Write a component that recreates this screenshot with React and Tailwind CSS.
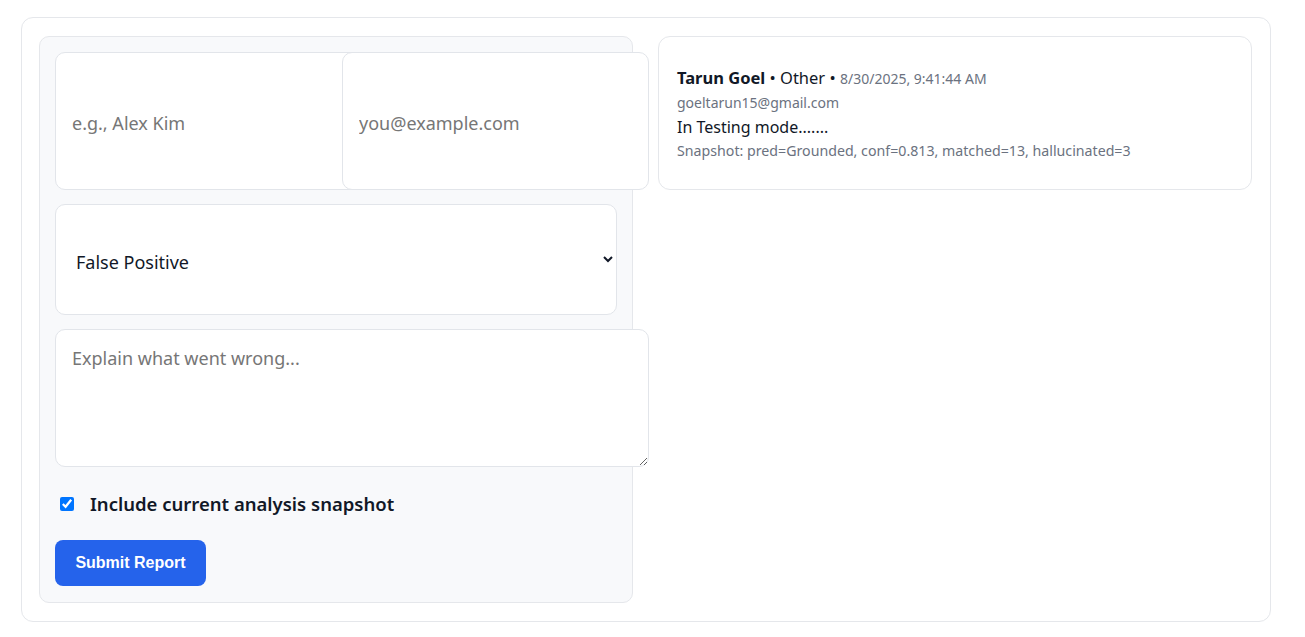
import { useState } from "react";

const fieldBase =
  "block rounded-[10px] border border-[#e2e5ea] bg-white text-lg text-[#111827] placeholder:text-[#767676] outline-none";

function ReportForm() {
  const [include, setInclude] = useState(true);

  return (
    <div className="flex flex-col rounded-[10px] border border-[#e5e7eb] bg-[#f8f9fb] px-[15px] pb-[16px] pt-[15px]">
      <div className="grid grid-cols-2 gap-3">
        <input
          className={`${fieldBase} h-[138px] w-[calc(100%+32px)] px-4 pt-1`}
          placeholder="e.g., Alex Kim"
        />
        <input
          className={`${fieldBase} h-[138px] w-[calc(100%+32px)] px-4 pt-1`}
          placeholder="you@example.com"
        />
      </div>

      <select
        className={`${fieldBase} mt-[14px] h-[111px] w-full px-4 pt-1`}
        defaultValue="fp"
      >
        <option value="fp">False Positive</option>
        <option value="fn">False Negative</option>
        <option value="other">Other</option>
      </select>

      <textarea
        className={`${fieldBase} mt-[14px] h-[138px] w-[calc(100%+32px)] px-4 py-4 leading-6`}
        placeholder="Explain what went wrong..."
      />

      <label className="mt-[23px] flex h-[28px] items-center gap-4 pl-[5px] text-[18.5px] font-semibold text-[#111827]">
        <input
          type="checkbox"
          className="h-[14px] w-[14px] accent-[#0075ff]"
          checked={include}
          onChange={(e) => setInclude(e.target.checked)}
        />
        Include current analysis snapshot
      </label>

      <button className="mt-[22px] h-[46px] w-[151px] rounded-lg bg-[#2563eb] font-['Liberation_Sans',Arial,sans-serif] text-base font-bold text-white">
        Submit Report
      </button>
    </div>
  );
}

function ReportCard() {
  return (
    <div className="self-start rounded-xl border border-[#e5e7eb] bg-white px-[18px] pb-[28px] pt-[29px]">
      <div className="text-[16.5px] leading-6 text-[#111827]">
        <span className="font-bold">Tarun Goel</span>
        <span> • Other • </span>
        <span className="text-sm text-[#6b7280]">8/30/2025, 9:41:44 AM</span>
      </div>
      <div className="mt-[3px] text-sm leading-5 text-[#6b7280]">goeltarun15@gmail.com</div>
      <div className="mt-[2px] leading-6 text-[#111827]">In Testing mode.......</div>
      <div className="mt-[2px] text-[14.2px] leading-5 text-[#6b7280]">
        Snapshot: pred=Grounded, conf=0.813, matched=13, hallucinated=3
      </div>
    </div>
  );
}

export default function App() {
  return (
    <div className="min-h-screen bg-white pl-[21px] pt-[17px] font-['Noto_Sans',sans-serif]">
      <div className="grid w-[1250px] grid-cols-2 items-start gap-[25px] rounded-xl border border-[#e5e7eb] bg-white pb-[18px] pl-[17px] pr-[18px] pt-[18px]">
        <ReportForm />
        <ReportCard />
      </div>
    </div>
  );
}
